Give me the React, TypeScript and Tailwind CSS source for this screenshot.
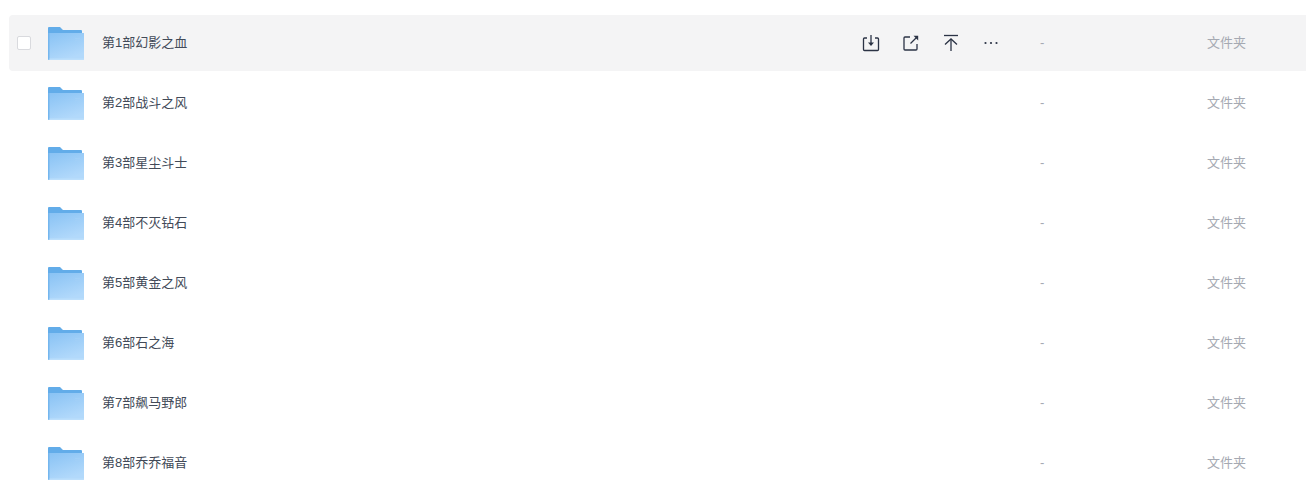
import { useId } from "react";

const files = [
  "第1部幻影之血",
  "第2部战斗之风",
  "第3部星尘斗士",
  "第4部不灭钻石",
  "第5部黄金之风",
  "第6部石之海",
  "第7部飙马野郎",
  "第8部乔乔福音",
];

function FolderIcon() {
  const id = useId();
  return (
    <svg width="36" height="33" viewBox="0 0 36 33" className="shrink-0">
      <defs>
        <linearGradient id={id} x1="0" y1="0" x2="0.45" y2="1">
          <stop offset="0" stopColor="#88c2f4" />
          <stop offset="1" stopColor="#b2d9fb" />
        </linearGradient>
      </defs>
      <path d="M1 0h11l3 3h18a1 1 0 0 1 1 1v4H0V1a1 1 0 0 1 1-1z" fill="#62ace9" />
      <path d="M0 6h36v26a1 1 0 0 1-1 1H1a1 1 0 0 1-1-1z" fill={`url(#${id})`} />
      <path d="M0 6h1.5v27H1a1 1 0 0 1-1-1z" fill="#74b6ee" />
      <path d="M1.5 31.5H36V32a1 1 0 0 1-1 1H1.5z" fill="#bcdffc" />
      <path d="M27 11.5h5M27 13.5h5" stroke="#a2cff6" strokeWidth="0.8" />
    </svg>
  );
}

function RowActions() {
  return (
    <div className="flex items-center gap-[20px] text-[#2b3345]">
      <svg width="20" height="20" viewBox="0 0 20 20" fill="none" stroke="currentColor" strokeWidth="1.3">
        <path d="M6 5H3.5a1 1 0 0 0-1 1v10.5a1 1 0 0 0 1 1h13a1 1 0 0 0 1-1V6a1 1 0 0 0-1-1H14" />
        <path d="M10 2v9" />
        <path d="M7 9.5h6L10 13z" fill="currentColor" stroke="none" />
      </svg>
      <svg width="20" height="20" viewBox="0 0 20 20" fill="none" stroke="currentColor" strokeWidth="1.3">
        <path d="M9 4H4a1 1 0 0 0-1 1v11a1 1 0 0 0 1 1h11a1 1 0 0 0 1-1v-5" />
        <path d="M9.5 10.5L16 4" />
        <path d="M12.5 2.8h4.7v4.7z" fill="currentColor" stroke="none" />
      </svg>
      <svg width="20" height="20" viewBox="0 0 20 20" fill="none" stroke="currentColor" strokeWidth="1.3">
        <path d="M3 2.5h14" />
        <path d="M10 6v12" />
        <path d="M4 11.5L10 6l6 5.5" />
      </svg>
      <svg width="20" height="20" viewBox="0 0 20 20" fill="currentColor">
        <circle cx="4.5" cy="10" r="1.1" />
        <circle cx="10" cy="10" r="1.1" />
        <circle cx="15.5" cy="10" r="1.1" />
      </svg>
    </div>
  );
}

export default function App() {
  return (
    <div
      className="flex h-[500px] flex-col gap-[4px] overflow-hidden bg-white pt-[15px] pl-[9px]"
      style={{ fontFamily: '"Liberation Sans", "Noto Sans CJK SC", sans-serif' }}
    >
      {files.map((name, i) => (
        <div
          key={name}
          className={`flex h-[56px] shrink-0 items-center rounded-l-[4px] ${i === 0 ? "bg-[#f4f4f5]" : ""}`}
        >
          <div className="flex w-[39px] shrink-0 pl-[8px]">
            {i === 0 && <div className="h-[14px] w-[14px] rounded-[2px] border border-[#d9dade] bg-white" />}
          </div>
          <FolderIcon />
          <div className="ml-[18px] min-w-0 flex-1 text-[13px] text-[#424a58]">{name}</div>
          <div className="flex w-[179px] shrink-0 justify-start">{i === 0 && <RowActions />}</div>
          <div className="w-[167px] shrink-0 text-[13px] text-[#a5a9b2]">-</div>
          <div className="w-[99px] shrink-0 text-[13px] text-[#a5a9b2]">文件夹</div>
        </div>
      ))}
    </div>
  );
}
